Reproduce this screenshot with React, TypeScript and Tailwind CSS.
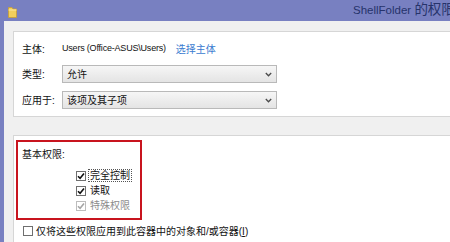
import type { ReactNode } from 'react';

const FONT = "font-['Liberation_Sans','Noto_Sans_CJK_SC',sans-serif]";

function Chevron() {
  return (
    <svg width="7" height="5" viewBox="0 0 7 5" className="shrink-0">
      <path d="M0.8 1 L3.5 3.8 L6.2 1" fill="none" stroke="#4a4a4a" strokeWidth="1.3" />
    </svg>
  );
}

function Select({ value }: { value: string }) {
  return (
    <div className="flex h-[18px] w-[215px] items-center justify-between border border-[#b9b9b9] bg-gradient-to-b from-[#f6f6f6] to-[#e4e4e4] pl-[4px] pr-[4px] text-[10px] text-[#111]">
      <span>{value}</span>
      <Chevron />
    </div>
  );
}

function CheckBox({ checked, disabled }: { checked?: boolean; disabled?: boolean }) {
  return (
    <span
      className={`flex h-[10px] w-[10px] shrink-0 items-center justify-center border bg-white ${
        disabled ? 'border-[#bdbdbd]' : 'border-[#6f6f6f]'
      }`}
    >
      {checked && (
        <svg width="8" height="8" viewBox="0 0 8 8">
          <path
            d="M1 4.2 L3.1 6.3 L7 1.6"
            fill="none"
            stroke={disabled ? '#a5a5a5' : '#111'}
            strokeWidth="1.6"
          />
        </svg>
      )}
    </span>
  );
}

function PermRow({ children, checked, disabled }: { children: ReactNode; checked?: boolean; disabled?: boolean }) {
  return (
    <div className="flex h-[15px] items-center gap-[2px]">
      <CheckBox checked={checked} disabled={disabled} />
      {children}
    </div>
  );
}

export default function App() {
  return (
    <div className={`flex h-[242px] w-[450px] flex-col overflow-hidden bg-[#7880c1] ${FONT}`}>
      {/* title bar */}
      <div className="flex h-[21px] shrink-0 items-center overflow-hidden whitespace-nowrap">
        <svg width="9" height="12" viewBox="0 0 9 12" className="ml-[8px] mt-[2px] shrink-0">
          <path d="M0.5 1.5 H4 L5 3 H8.5 V11.5 H0.5 Z" fill="#f2cf5b" stroke="#c9a032" strokeWidth="0.8" />
          <path d="M0.5 4 H8.5" stroke="#fbe7a2" strokeWidth="1" />
        </svg>
        <span className="ml-[336px] text-[11.5px] text-[#26336b]">
          ShellFolder <span className="text-[13.5px]">的权限</span>
        </span>
      </div>

      {/* window body */}
      <div className="ml-[4px] flex flex-1 flex-col bg-[#f0f0f0] pl-[9px] pt-[10px]">
        <div className="flex h-[86px] flex-col border-y border-l border-[#d6d6d6] bg-white pl-[8px] pt-[10px] text-[10px] text-[#111]">
          <div className="flex h-[14px] items-center">
            <span className="w-[40px]">主体:</span>
            <span className="text-[9px] tracking-[-0.2px]">Users (Office-ASUS\Users)</span>
            <span className="ml-[10px] text-[#3a7bd0]">选择主体</span>
          </div>
          <div className="mt-[9px] flex items-center">
            <span className="w-[40px]">类型:</span>
            <Select value="允许" />
          </div>
          <div className="mt-[8px] flex items-center">
            <span className="w-[40px]">应用于:</span>
            <Select value="该项及其子项" />
          </div>
        </div>

        <div className="mt-[18px] flex flex-1 flex-col border-l border-t border-[#d6d6d6] bg-white pl-[2px] pt-[4px] text-[10px] text-[#111]">
          <div className="flex h-[80px] w-[126px] flex-col border-[2.5px] border-[#c8141e] pl-[4px] pt-[5px]">
            <span>基本权限:</span>
            <div className="ml-[54px] mt-[6px] flex flex-col">
              <PermRow checked>
                <span className="border border-dotted border-[#555] px-[1px] leading-[11px]">完全控制</span>
              </PermRow>
              <PermRow checked>
                <span className="pl-[2px]">读取</span>
              </PermRow>
              <PermRow checked disabled>
                <span className="pl-[2px] text-[#8c8c8c]">特殊权限</span>
              </PermRow>
            </div>
          </div>
          <div className="ml-[7px] mt-[4px] flex h-[14px] items-center gap-[3px]">
            <CheckBox />
            <span>仅将这些权限应用到此容器中的对象和/或容器(<span className="underline">I</span>)</span>
          </div>
        </div>
      </div>
    </div>
  );
}
